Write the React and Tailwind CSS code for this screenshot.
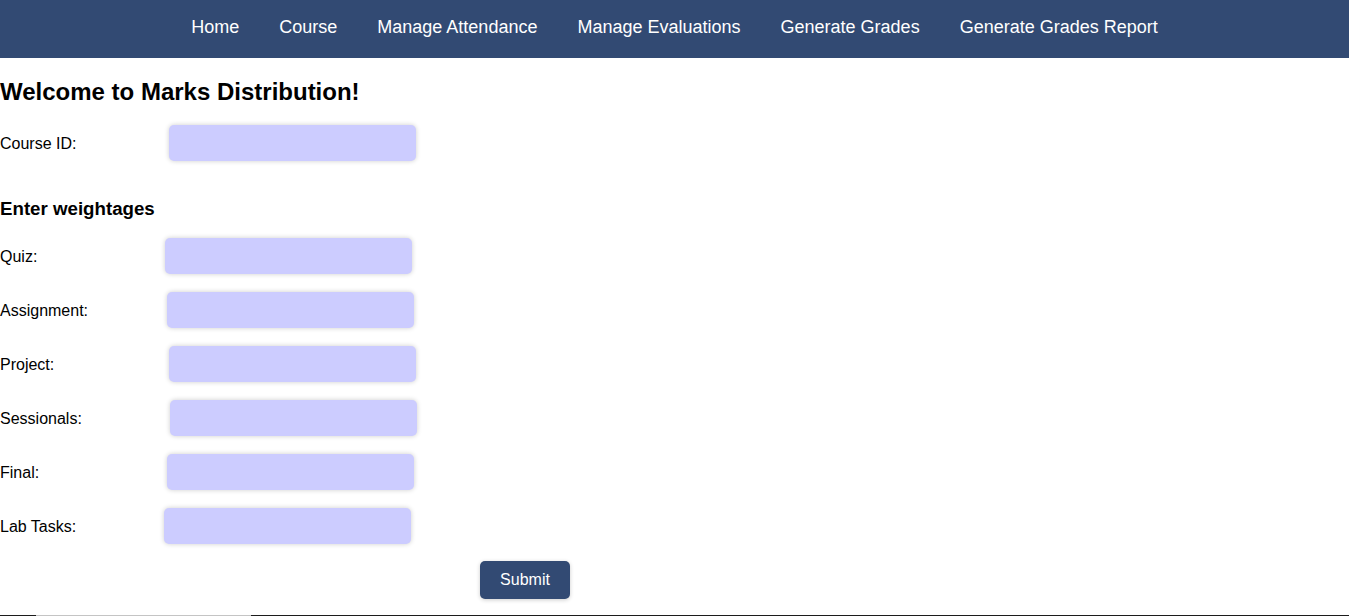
const NAV = ['Home', 'Course', 'Manage Attendance', 'Manage Evaluations', 'Generate Grades', 'Generate Grades Report']

const FIELDS = [
  { label: 'Quiz:', offset: 'ml-[165px]' },
  { label: 'Assignment:', offset: 'ml-[167px]' },
  { label: 'Project:', offset: 'ml-[169px]' },
  { label: 'Sessionals:', offset: 'ml-[170px]' },
  { label: 'Final:', offset: 'ml-[167px]' },
  { label: 'Lab Tasks:', offset: 'ml-[164px]' },
]

function Field({ label, offset }) {
  return (
    <div className="relative flex h-9 items-center">
      <label className="absolute left-0 pt-[2px] text-[16px] text-black">{label}</label>
      <input
        type="text"
        className={`${offset} h-9 w-[247px] rounded-[5px] bg-[#ccccff] shadow-[0_0_5px_rgba(0,0,0,0.2)] outline-none`}
      />
    </div>
  )
}

export default function App() {
  return (
    <div className="min-h-[616px] bg-white font-['Liberation_Sans',Arial,sans-serif] text-black">
      {/* Nav */}
      <nav className="flex h-[58px] items-center justify-center gap-10 bg-[#324a73] pb-1">
        {NAV.map(item => (
          <a key={item} className="cursor-pointer text-[18px] text-white">{item}</a>
        ))}
      </nav>

      <div className="flex flex-col">
        <h2 className="mt-5 text-[24px] font-bold leading-[28px]">Welcome to Marks Distribution!</h2>

        <div className="mt-[19px]">
          <Field label="Course ID:" offset="ml-[169px]" />
        </div>

        <h3 className="mt-[37px] text-[18.7px] font-bold leading-[22px]">Enter weightages</h3>

        <div className="mt-[18px] flex flex-col gap-[18px]">
          {FIELDS.map(f => (
            <Field key={f.label} {...f} />
          ))}
        </div>

        <div className="mt-[17px]">
          <button className="ml-[480px] h-[38px] w-[90px] rounded-[5px] bg-[#324a73] text-[16px] text-white shadow-[0_1px_4px_rgba(0,0,0,0.2)]">
            Submit
          </button>
        </div>

        <div className="mt-[16px] flex h-px">
          <div className="w-[36px] bg-[#1c1c1c]" />
          <div className="w-[215px] bg-[#c4c4c4]" />
          <div className="flex-1 bg-[#1c1c1c]" />
        </div>
      </div>
    </div>
  )
}
